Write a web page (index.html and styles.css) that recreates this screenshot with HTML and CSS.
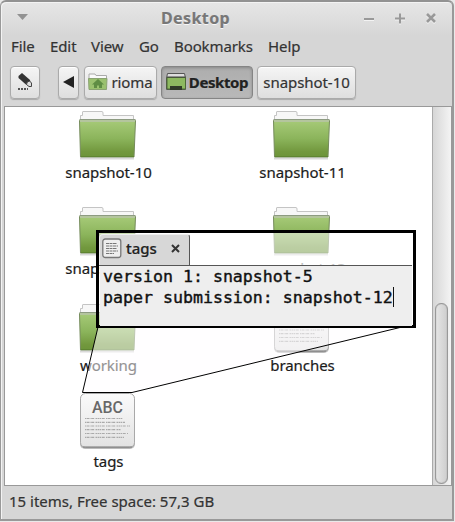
FILE: index.html
```html
<!DOCTYPE html>
<html lang="en">
<head>
<meta charset="utf-8">
<title>Desktop</title>
<link rel="stylesheet" href="styles.css">
</head>
<body>
<svg width="0" height="0" class="defs">
  <defs>
    <linearGradient id="green" x1="0" y1="0" x2="0" y2="1"><stop offset="0" stop-color="#a6ca78"/><stop offset=".5" stop-color="#8bb45b"/><stop offset=".85" stop-color="#72983e"/><stop offset="1" stop-color="#6c9439"/></linearGradient>
    <linearGradient id="paper" x1="0" y1="0" x2="0" y2="1"><stop offset="0" stop-color="#fbfbfb"/><stop offset="1" stop-color="#e2e2e2"/></linearGradient>
    <symbol id="folder" viewBox="0 0 60 50">
      <path d="M2.500 12V4.500H4.500V1Q4.500 .5 5 .5H24Q25 .5 25 2V4.500H55.500V12Z" fill="#f7f7f7" stroke="#c4c4c4"/>
      <path d="M2 47.500H56" stroke="#000" stroke-opacity=".15" stroke-width="2"/>
      <path d="M1.500 9.500H57.500L56 46H2.500Z" fill="url(#green)" stroke="#758b5c"/>
      <path d="M2 10H57" stroke="#b4c59e" stroke-width="2"/>
      <path d="M1.500 8.500H57.500" stroke="#8d9b81"/>
      <path d="M3 45.500H56" stroke="#5f8532"/>
    </symbol>
    <symbol id="document" viewBox="0 0 60 58">
      <rect x="2" y="2" width="55" height="54" rx="5" fill="#777" opacity=".5"/>
      <rect x="2.500" y=".5" width="54" height="54" rx="5" fill="url(#paper)" stroke="#a9a9a9"/>
      <path d="M5 54H54" stroke="#777"/>
      <g stroke="#aaa" stroke-width="1.200" stroke-dasharray="1.500 .5 2 .5 1 .7 3 1.300"><path d="M7 25.500H45M7 29.300H47M7 33H52M7 36.700H43M7 40.500H50M7 44.300H46"/></g>
    </symbol>
  </defs>
</svg>
<main class="window">
  <header class="titlebar">
    <svg class="arrow" width="12" height="8"><path d="M0 1H11L5.500 7Z" fill="#929292"/></svg>
    <h1>Desktop</h1>
    <svg class="controls" width="74" height="14" fill="none" stroke="#999" stroke-width="2"><path d="M0 8H10M31 7.500H41M36 2.500V12.500"/><path d="M63 3L71 11M71 3L63 11" stroke-width="2.600"/></svg>
  </header>
  <nav class="menu"><span class="file">File</span><span class="edit">Edit</span><span class="view">View</span><span class="go">Go</span><span class="bookmarks">Bookmarks</span><span>Help</span></nav>
  <div class="toolbar">
    <button class="pencil"><svg width="18" height="20"><path d="M2.500 4L6 1L14 8L15 13H10.500L2.500 6Z" fill="#333"/><path d="M10.500 12.500Q10.500 9.500 13.500 9L15.500 11V14.500H13Z" fill="#ddd" stroke="#444"/><path d="M2 17H12" stroke="#555" stroke-width="2" stroke-dasharray="2 1"/></svg></button>
    <button class="back"><svg width="12" height="14"><path d="M11 1V13L0 7Z" fill="#222"/></svg></button>
    <button class="home"><svg width="20" height="18"><path d="M1 7V1H7L8 2.500H18.500V7" fill="#fafafa" stroke="#aaa"/><path d="M.5 5.500H19L18.500 16.500H1Z" fill="#9ac16f" stroke="#8ba373"/><path d="M4 11.500L10 6L16 11.500H14V15H11V12.500H9V15H6V11.500Z" fill="#5f8d44"/></svg><span>rioma</span></button>
    <button class="current"><svg width="21" height="18"><path d="M1.500 .5H18.500L19.500 5V16.500H.5V5Z" fill="#ddd" stroke="#555"/><path d="M1 4.500H19.500V16H1Z" fill="#8db960" stroke="#4c6835"/><path d="M1 4H19.500" stroke="#444"/><path d="M4 13H16V17H4Z" fill="#303b28"/></svg><span>Desktop</span></button>
    <button class="last"><span>snapshot-10</span></button>
  </div>
  <section class="pane">
    <div class="files">
      <div class="item"><svg class="icon"><use href="#folder" width="60" height="50"/></svg><span>snapshot-10</span></div>
      <div class="item"><svg class="icon"><use href="#folder" width="60" height="50"/></svg><span>snapshot-11</span></div>
      <div class="item"><svg class="icon"><use href="#folder" width="60" height="50"/></svg><span>snapshot-12</span></div>
      <div class="item"><svg class="icon"><use href="#folder" width="60" height="50"/></svg><span>snapshot-13</span></div>
      <div class="item"><svg class="icon"><use href="#folder" width="60" height="50"/></svg><span>working</span></div>
      <div class="item doc"><svg class="icon"><use href="#document" width="60" height="58"/></svg><span>branches</span></div>
      <div class="item doc"><svg class="icon"><use href="#document" width="60" height="58"/><text class="abc" x="14" y="20" textLength="31" lengthAdjust="spacingAndGlyphs">ABC</text></svg><span>tags</span></div>
    </div>
    <div class="scroll"><div class="thumb"></div></div>
  </section>
  <footer><span>15 items, Free space: 57,3 GB</span></footer>
</main>
<svg class="connector" width="455" height="522"><path d="M98 327L82.500 392.500H132L402 327Z" fill="#fffdff" fill-opacity=".52"/><path d="M98 327L82.500 392.500H132L402 327" fill="none" stroke="#000"/></svg>
<aside class="callout">
  <div class="tabs"><div class="tab"><svg width="20" height="21"><rect x=".8" y="1" width="18" height="18.500" rx="2.500" fill="#eee" stroke="#777" stroke-width="1.300"/><path d="M4 5.500H15M4 8H16M4 10.500H15M4 13H16M4 15.500H12" stroke="#777" stroke-dasharray="3 .5"/></svg><span>tags</span><svg class="close" width="9" height="9"><path d="M1 1L8 8M8 1L1 8" stroke="#333" stroke-width="2"/></svg></div></div>
  <div class="editor"><div>version 1: snapshot-5</div><div class="line">paper submission: snapshot-12<i></i></div></div>
</aside>
</body>
</html>
```
FILE: styles.css
```css
* { box-sizing: border-box; }
body { margin: 0; width: 455px; height: 522px; overflow: hidden; background: #e9e9e9; font: 15px/20px "Noto Sans", "Open Sans", sans-serif; color: #333; letter-spacing: -.06px; -webkit-text-stroke: .2px; }
svg { display: block; flex: none; }
.defs { position: absolute; }
.window { width: 454px; height: 521px; border: 1px solid #999; border-top: 2px solid #929292; border-right-width: 2px; border-bottom: 2px solid #999; border-radius: 6px 6px 0 0; background: linear-gradient(#e6e6e6, #d6d6d6 34px); padding: 0 1px 0 3px; display: flex; flex-direction: column; box-shadow: inset 1px 1px #f3f3f3; }
.titlebar { height: 33px; display: flex; align-items: center; padding: 0 13px 0 13px; flex: none; }
.titlebar h1 { font-size: 16px; line-height: 22px; margin: -1px auto 0 132px; color: #777; letter-spacing: .4px; text-shadow: 0 1px #f7f7f7; }
.arrow { margin-top: -3px; }
.controls { margin-top: -1px; filter: drop-shadow(0 1px #f3f3f3); }
.menu { height: 25px; padding: 1px 0 0 7px; display: flex; flex: none; letter-spacing: -.1px; }
.menu .file { width: 39px; }
.menu .edit { width: 41px; }
.menu .view { width: 48px; }
.menu .go { width: 35px; }
.menu .bookmarks { width: 94px; }
.toolbar { height: 46px; padding: 6px 0 0 6px; display: flex; flex: none; }
button { height: 33px; border: 1px solid #aaa; border-radius: 4px; padding: 0 0 1px; background: linear-gradient(#f5f5f5, #dedede); box-shadow: 0 1px 1px #aaa, inset 0 1px #fff; display: flex; align-items: center; justify-content: center; gap: 3px; font: inherit; color: #333; letter-spacing: inherit; }
.pencil { width: 30px; margin-right: 18px; }
.back { width: 21px; margin-right: 5px; }
.home { width: 73px; margin-right: 4px; letter-spacing: -.1px; }
.current { width: 92px; margin-right: 4px; gap: 2px; background: linear-gradient(#adadad, #b9b9b9); border-color: #858585; box-shadow: inset 0 1px 3px #888; font-weight: bold; letter-spacing: -.4px; color: #222; }
.last { width: 99px; }
.pane { height: 380px; width: 448px; border: 1px solid #999; background: #fff; display: flex; flex: none; }
.files { flex: 1; padding: 4px 0 0 6px; display: grid; grid-template-columns: 194px 194px; grid-auto-rows: 96.4px; align-content: start; overflow: hidden; color: #1b1b1b; }
.item { display: flex; flex-direction: column; align-items: center; }
.item span { padding-left: 1px; }
.icon { width: 60px; height: 50px; margin: 0 0 1px; }
.doc .icon { height: 58px; margin: -7px 0 0; }
.abc { font: 500 17px Roboto, sans-serif; fill: #686868; letter-spacing: 0; }
.scroll { width: 19px; border-left: 1px solid #aaa; background: linear-gradient(90deg, #d6d6d6, #f4f4f4); padding-top: 196px; }
.thumb { width: 13px; height: 181px; margin-left: 2px; border: 1px solid #999; border-radius: 6px; background: linear-gradient(90deg, #e5e5e5, #cecece); box-shadow: inset 0 0 1px #777; }
footer { padding: 5px 0 0 5px; letter-spacing: 0; }
.connector { position: absolute; left: 0; top: 0; }
.callout { position: absolute; left: 96px; top: 230px; width: 320px; height: 98px; border: 3px solid #000; background: rgba(255,255,255,.52); padding: 1px 1px 1px 0; }
.tabs { height: 32px; border-bottom: 1px solid #555; background: linear-gradient(transparent 26px, #fff9 32px); }
.tab { width: 91px; height: 31px; background: #d7d7d7; border: 1px solid #eee; border-right: 1px solid #555; border-bottom: 0; border-radius: 4px 3px 0 0; display: flex; align-items: center; padding: 0 0 4px 2px; color: #222; font-weight: 500; }
.tab span { margin-left: 4px; }
.close { margin-left: 14px; }
.editor { height: 60px; margin-left: 1px; background: #eee; padding-left: 3px; font: 16.6px/21px "DejaVu Sans Mono", monospace; color: #111; letter-spacing: 0; white-space: nowrap; -webkit-text-stroke: .4px; }
.line { display: flex; }
.line i { width: 1px; height: 20px; background: #111; }
```
